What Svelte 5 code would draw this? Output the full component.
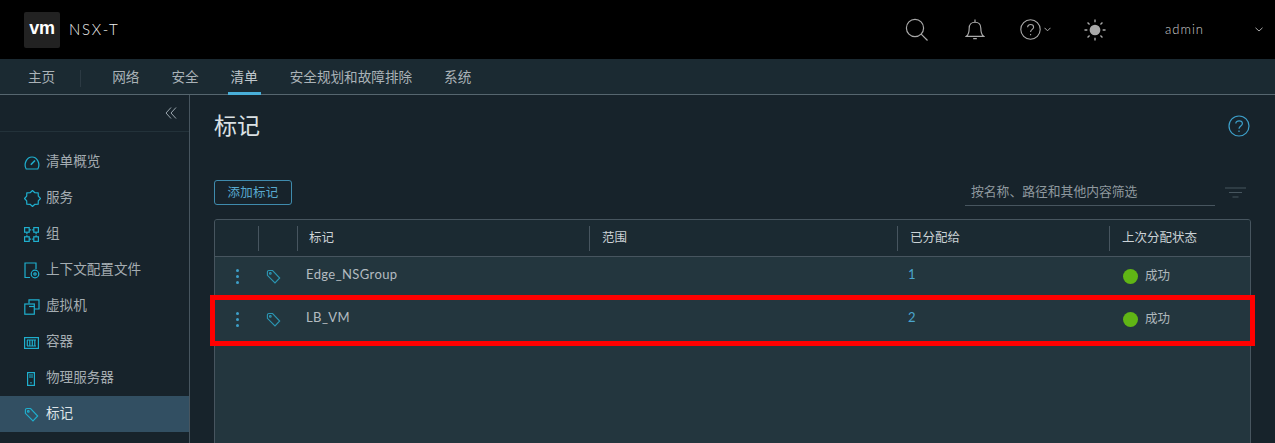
<script>
  const tabs = [
    { label: '主页', home: true },
    { label: '网络' },
    { label: '安全' },
    { label: '清单', active: true },
    { label: '安全规划和故障排除' },
    { label: '系统' }
  ];
  const sideItems = [
    { label: '清单概览', icon: 'gauge' },
    { label: '服务', icon: 'gear' },
    { label: '组', icon: 'group' },
    { label: '上下文配置文件', icon: 'profile' },
    { label: '虚拟机', icon: 'vm' },
    { label: '容器', icon: 'container' },
    { label: '物理服务器', icon: 'server' },
    { label: '标记', icon: 'tag', selected: true }
  ];
  const rows = [
    { name: 'Edge_NSGroup', count: 1, status: '成功' },
    { name: 'LB_VM', count: 2, status: '成功' }
  ];
</script>

{#snippet tag(size)}
  <svg width={size} height={size} viewBox="0 0 16 16" fill="none" stroke="currentColor" stroke-width="1.2">
    <path d="M1.5 3.2 a1.6 1.6 0 0 1 1.6-1.6 H7 L14.6 9.6 L9.6 14.8 L1.5 6.8 Z" />
    <circle cx="4.6" cy="4.7" r="0.9" />
  </svg>
{/snippet}

<div class="page">
  <header class="top">
    <div class="logo">vm</div>
    <span class="product">NSX-T</span>
    <div class="top-icons">
      <svg class="search" width="24" height="24" viewBox="0 0 24 24" fill="none" stroke="#a9a9a9" stroke-width="1.2">
        <circle cx="10" cy="10" r="8.6" /><path d="M16.2 16.2 L22.5 22.5" />
      </svg>
      <svg class="bell" width="20" height="23" viewBox="0 0 22 24" fill="none" stroke="#a9a9a9" stroke-width="1.3">
        <path d="M1.5 19.5 C4.5 17 4.6 14 4.6 10.5 C4.6 6.5 7 4 11 4 C15 4 17.4 6.5 17.4 10.5 C17.4 14 17.5 17 20.5 19.5 Z" />
        <path d="M11 1 V4 M9 22 H13" />
      </svg>
      <span class="help">
        <svg width="21" height="21" viewBox="0 0 21 21" fill="none" stroke="#a9a9a9" stroke-width="1.1">
          <circle cx="10.5" cy="10.5" r="9.7" />
          <path d="M7.6 8.2 C7.6 4.6 13.6 4.8 13.6 8.2 C13.6 10.4 10.6 10.4 10.6 13" />
          <path d="M10.6 15 V16.2" />
        </svg>
        <svg width="7" height="5" viewBox="0 0 7 5" fill="none" stroke="#a9a9a9"><path d="M0.5 0.8 L3.5 3.8 L6.5 0.8" /></svg>
      </span>
      <svg class="sun" width="22" height="22" viewBox="0 0 23 23" fill="#a9a9a9" stroke="#a9a9a9" stroke-width="1.4">
        <circle cx="11.5" cy="11.5" r="5.6" stroke="none" />
        <path d="M11.5 0.5 V3.5 M11.5 19.5 V22.5 M0.5 11.5 H3.5 M19.5 11.5 H22.5 M3.7 3.7 L5.8 5.8 M17.2 17.2 L19.3 19.3 M3.7 19.3 L5.8 17.2 M17.2 5.8 L19.3 3.7" />
      </svg>
      <span class="user">admin</span>
      <svg class="user-caret" width="8" height="5" viewBox="0 0 8 5" fill="none" stroke="#a9a9a9"><path d="M0.5 0.8 L4 4 L7.5 0.8" /></svg>
    </div>
  </header>

  <nav class="tabs">
    {#each tabs as t}
      <span class="tab" class:home={t.home} class:active={t.active}>{t.label}</span>
    {/each}
  </nav>

  <div class="body">
    <aside class="side">
      <div class="collapse">
        <svg width="12" height="12" viewBox="0 0 12 12" fill="none" stroke="#9aa6ae" stroke-width="1"><path d="M6 0.5 L1 6 L6 11.5 M11 0.5 L6 6 L11 11.5" /></svg>
      </div>
      <ul>
        {#each sideItems as it}
          <li class:selected={it.selected}>
            <span class="side-icon">
              {#if it.icon === 'gauge'}
                <svg width="16" height="14" viewBox="0 0 16 14" fill="none" stroke="currentColor" stroke-width="1.2">
                  <path d="M2.2 13 C-0.6 8 2.6 1 8 1 C13.4 1 16.6 8 13.8 13 Z" />
                  <path d="M6.8 8.8 L11 4.5" stroke-width="1.6" />
                </svg>
              {:else if it.icon === 'gear'}
                <svg width="17" height="17" viewBox="0 0 17 17" fill="none" stroke="currentColor" stroke-width="1.2" stroke-linejoin="round">
                  <path d="M16.5 8.5 L14.3 10.9 L14.2 14.2 L10.9 14.3 L8.5 16.5 L6.1 14.3 L2.8 14.2 L2.7 10.9 L0.5 8.5 L2.7 6.1 L2.8 2.8 L6.1 2.7 L8.5 0.5 L10.9 2.7 L14.2 2.8 L14.3 6.1 Z" />
                </svg>
              {:else if it.icon === 'group'}
                <svg width="15" height="15" viewBox="0 0 15 15" fill="none" stroke="currentColor" stroke-width="1.2">
                  <rect x="0.6" y="0.6" width="4.6" height="4.6" /><rect x="9.8" y="0.6" width="4.6" height="4.6" />
                  <rect x="0.6" y="9.8" width="4.6" height="4.6" /><rect x="9.8" y="9.8" width="4.6" height="4.6" />
                  <path d="M5.2 2.9 H9.8 M5.2 12.1 H9.8 M2.9 5.2 V9.8 M12.1 5.2 V9.8" stroke-dasharray="2 1" />
                </svg>
              {:else if it.icon === 'profile'}
                <svg width="16" height="17" viewBox="0 0 16 17" fill="none" stroke="currentColor" stroke-width="1.2">
                  <path d="M6 15.5 H1 V1 H12 V7" />
                  <circle cx="11" cy="12" r="3.8" /><circle cx="11" cy="12" r="1.2" />
                </svg>
              {:else if it.icon === 'vm'}
                <svg width="16" height="16" viewBox="0 0 16 16" fill="none" stroke="currentColor" stroke-width="1.2">
                  <path d="M5 4.5 V0.8 H15 V10 H10.5" />
                  <rect x="0.8" y="5" width="9.5" height="10.2" /><path d="M5 7.5 H10.3" />
                </svg>
              {:else if it.icon === 'container'}
                <svg width="15" height="12" viewBox="0 0 15 12" fill="none" stroke="currentColor" stroke-width="1.2">
                  <rect x="0.6" y="0.6" width="13.8" height="10.8" />
                  <path d="M3.3 3 V9 M5.8 3 V9 M8.3 3 V9 M10.8 3 V9 M3 3 H12 M3 9 H12" />
                </svg>
              {:else if it.icon === 'server'}
                <svg class="narrow" width="8" height="14" viewBox="0 0 8 14" fill="none" stroke="currentColor" stroke-width="1.2">
                  <rect x="0.6" y="0.6" width="6.8" height="12.8" />
                  <path d="M2 3 H6 M2 5 H6 M4 10 V11.5" />
                </svg>
              {:else}
                {@render tag(15)}
              {/if}
            </span>
            <span>{it.label}</span>
          </li>
        {/each}
      </ul>
    </aside>

    <main class="main">
      <div class="title-row">
        <h1>标记</h1>
        <svg width="22" height="22" viewBox="0 0 22 22" fill="none" stroke="#3d9fc9" stroke-width="1.2">
          <circle cx="11" cy="11" r="10" />
          <path d="M7.8 8.6 C7.8 4.8 14.4 5 14.4 8.6 C14.4 11 11 11 11 13.8" />
          <path d="M11 15.6 V17" />
        </svg>
      </div>

      <div class="tools">
        <button type="button">添加标记</button>
        <div class="filter">
          <div class="filter-input">按名称、路径和其他内容筛选</div>
          <svg width="21" height="11" viewBox="0 0 21 11" fill="none" stroke="#47565f" stroke-width="1.2"><path d="M0 1 H21 M4 5.5 H17 M7.5 10 H13.5" /></svg>
        </div>
      </div>

      <div class="table">
        <div class="row head">
          <span></span>
          <span class="hc"></span>
          <span class="hc"></span>
          <span class="hc text first">标记</span>
          <span class="hc text">范围</span>
          <span class="hc text">已分配给</span>
          <span class="hc text">上次分配状态</span>
        </div>
        {#each rows as r}
          <div class="row item">
            <span></span>
            <span class="dots"><i></i><i></i><i></i></span>
            <span class="row-tag">{@render tag(15)}</span>
            <span class="name">{r.name}</span>
            <span></span>
            <span class="count">{r.count}</span>
            <span class="status"><i class="dot"></i><span class="status-text">{r.status}</span></span>
          </div>
        {/each}
      </div>
    </main>
  </div>

  <div class="highlight"></div>
</div>

<style>
  :global(body) {
    margin: 0;
    background: #17232b;
  }
  .page {
    position: relative;
    width: 1275px;
    height: 443px;
    overflow: hidden;
    font-family: Lato, "Noto Sans CJK SC", sans-serif;
    color: #b9c1c6;
    background: #17232b;
  }
  .top {
    height: 59px;
    background: #000;
    display: flex;
    align-items: center;
    padding-left: 24px;
  }
  .logo {
    width: 36px;
    height: 36px;
    border-radius: 2px;
    background: #222;
    color: #fff;
    font: 700 18px/33px "Liberation Sans", sans-serif;
    letter-spacing: -0.3px;
    text-align: center;
  }
  .product {
    margin-left: 9px;
    padding-bottom: 2px;
    font-size: 15px;
    font-weight: 300;
    letter-spacing: 1.8px;
    color: #f2f2f2;
  }
  .top-icons {
    margin-left: auto;
    display: flex;
    align-items: center;
  }
  .search { margin-right: 36px; }
  .bell { margin-right: 35px; }
  .help {
    display: flex;
    align-items: center;
    gap: 3px;
    margin-right: 33px;
  }
  .sun { margin-right: 59px; }
  .user {
    padding-bottom: 2px;
    font-size: 13px;
    font-weight: 300;
    letter-spacing: 1px;
    color: #cfcfcf;
  }
  .user-caret { margin-left: 51px; margin-right: 12px; }

  .tabs {
    height: 36px;
    box-sizing: border-box;
    background: #1b2a32;
    border-bottom: 1px solid #56666f;
    display: flex;
    padding-left: 28px;
    gap: 32px;
    font-size: 13.6px;
    line-height: 37px;
  }
  .tab {
    position: relative;
    height: 35px;
    color: #aab2b7;
    white-space: nowrap;
  }
  .tab.home {
    margin-right: 25px;
  }
  .tab.home::after {
    content: '';
    position: absolute;
    right: -26px;
    top: 11px;
    width: 1px;
    height: 17px;
    background: #2c3a43;
  }
  .tab.active {
    color: #c0c8cd;
  }
  .tab.active::after {
    content: '';
    position: absolute;
    left: -3px;
    right: -3px;
    top: 33px;
    height: 3px;
    background: #49afd9;
  }

  .body {
    display: flex;
    height: 348px;
  }
  .side {
    width: 190px;
    box-sizing: border-box;
    flex: none;
    border-right: 1px solid #47555f;
    background: #17232b;
  }
  .collapse {
    height: 37px;
    box-sizing: border-box;
    border-bottom: 1px solid #23323a;
    display: flex;
    justify-content: flex-end;
    align-items: center;
    padding: 0 12px 0 0;
  }
  ul {
    margin: 12px 0 0;
    padding: 0;
    list-style: none;
  }
  li {
    height: 36px;
    box-sizing: border-box;
    padding-bottom: 5px;
    display: flex;
    align-items: center;
    font-size: 13.6px;
    color: #a5adb2;
    white-space: nowrap;
  }
  li.selected {
    background: #324f62;
    color: #dfe5e8;
  }
  .side-icon {
    width: 46px;
    flex: none;
    padding-left: 24px;
    padding-top: 6px;
    box-sizing: border-box;
    color: #1fafce;
    display: flex;
    align-items: center;
  }
  .narrow { margin-left: 3px; }

  .main {
    flex: 1;
    min-width: 0;
    padding: 0 24px;
  }
  .title-row {
    height: 60px;
    display: flex;
    justify-content: space-between;
    align-items: flex-start;
    padding-right: 1px;
  }
  h1 {
    margin: 14px 0 0;
    font-size: 23px;
    font-weight: 400;
    line-height: 32px;
    color: #dbe1e4;
  }
  .title-row svg {
    margin-top: 20px;
  }
  .tools {
    display: flex;
    justify-content: space-between;
    height: 39px;
    margin-top: 25px;
    align-items: flex-start;
    margin-right: 5px;
  }
  button {
    width: 78px;
    height: 25px;
    padding: 0 0 2px;
    background: transparent;
    border: 1px solid #3f8bad;
    border-radius: 3px;
    color: #57a9cf;
    font: 12.5px "Noto Sans CJK SC", sans-serif;
    letter-spacing: 0.3px;
  }
  .filter {
    display: flex;
    align-items: flex-start;
    gap: 10px;
  }
  .filter svg { margin-top: 7px; }
  .filter-input {
    width: 250px;
    height: 26px;
    box-sizing: border-box;
    padding-left: 6px;
    border-bottom: 1px solid #47555f;
    font-size: 12.8px;
    line-height: 23px;
    color: #8f999f;
  }
  .table {
    width: 1037px;
    height: 240px;
    box-sizing: border-box;
    border: 1px solid #47555f;
    border-radius: 3px;
    background: #23363e;
    overflow: hidden;
  }
  .row {
    display: grid;
    grid-template-columns: 0 43px 39px 292px 308px 212px 1fr;
    align-items: center;
  }
  .head {
    height: 36px;
    background: #1b2a32;
    border-bottom: 1px solid #47555f;
    font-size: 12.5px;
    color: #cbd2d6;
  }
  .hc {
    height: 25px;
    box-sizing: border-box;
    line-height: 24px;
  }
  .hc:nth-child(3) { border-left: 1px solid #47555f; }
  .hc.text {
    border-left: 1px solid #47555f;
    padding-left: 12px;
  }
  .hc.first { padding-left: 11px; }
  .item {
    height: 43px;
    box-sizing: border-box;
    padding-bottom: 4px;
    font-size: 13px;
    color: #b3bbc0;
  }
  .dots {
    display: flex;
    flex-direction: column;
    align-items: center;
    gap: 3px;
    padding-left: 2px;
  }
  .dots i {
    width: 3px;
    height: 3px;
    border-radius: 50%;
    background: #3d9fc9;
  }
  .row-tag {
    color: #2b96b3;
    padding-left: 8px;
    display: flex;
  }
  .name {
    padding-left: 9px;
    margin-top: -5px;
    letter-spacing: 0.4px;
  }
  .count {
    padding-left: 11px;
    margin-top: -5px;
    color: #4aa5cd;
  }
  .status {
    display: flex;
    align-items: center;
    gap: 7px;
    padding-left: 14px;
    font-size: 12.5px;
    color: #aeb7bc;
  }
  .status-text { margin-bottom: 5px; }
  .dot {
    width: 15px;
    height: 15px;
    border-radius: 50%;
    background: #60b515;
  }
  .highlight {
    position: absolute;
    left: 210px;
    top: 295px;
    width: 1045px;
    height: 51px;
    box-sizing: border-box;
    border: 5px solid #ff0000;
  }
</style>
